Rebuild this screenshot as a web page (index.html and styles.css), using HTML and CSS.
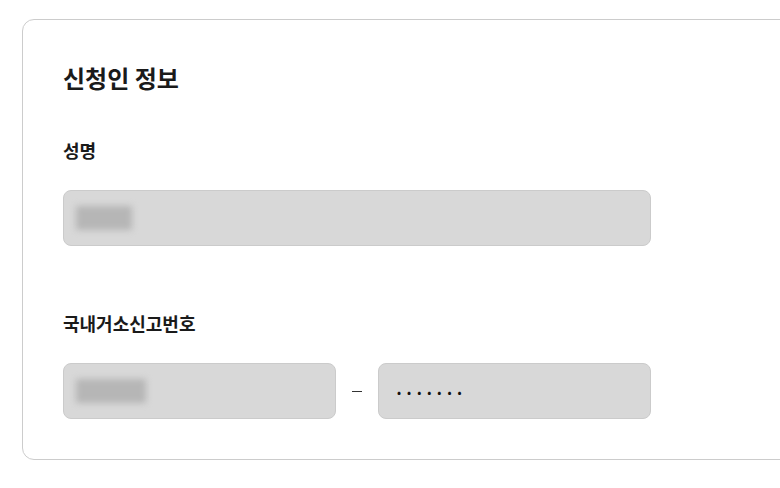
FILE: index.html
```html
<html>
  <head>
    <meta charset="utf-8">
    <link rel="stylesheet" href="styles.css">
  </head>
  <body>
    <div class="card">
      <h2 class="card_title">신청인 정보</h2>

      <div class="field">
        <p class="field_label">성명</p>
        <div class="input_box input_full">
          <span class="blur blur_name"></span>
        </div>
      </div><!-- field -->

      <div class="field field_reg">
        <p class="field_label">국내거소신고번호</p>
        <div class="input_row">
          <div class="input_box input_half">
            <span class="blur blur_num"></span>
          </div>
          <span class="dash"></span>
          <div class="input_box input_half">
            <span class="secret">•••••••</span>
          </div>
        </div>
      </div><!-- field -->
    </div><!-- card -->
  </body>
</html>
```

FILE: styles.css
```css
body { margin: 0; background: #ffffff; font-family: "Noto Sans CJK KR", "Noto Sans", sans-serif; color: #1a1a1a; }

.card { width: 820px; height: 441px; margin: 19px 0 0 22px; padding: 40px 40px; box-sizing: border-box; border: 1px solid #cccccc; border-radius: 12px; }
.card_title { margin: 0; font-size: 24px; line-height: 36px; font-weight: 700; }

.field { margin-top: 41px; }
.field_reg { margin-top: 64px; }
.field_label { margin: 0 0 27px; font-size: 18px; line-height: 26px; font-weight: 700; }

.input_row { display: flex; align-items: center; }
.input_box { display: flex; align-items: center; height: 56px; padding: 0 12px; box-sizing: border-box; background: #d8d8d8; border: 1px solid #cbcbcb; border-radius: 8px; }
.input_full { width: 588px; }
.input_half { width: 273px; }

.dash { width: 10px; height: 1px; margin: 0 16px; background: #333333; }

.blur { display: block; background: #b6b6b6; filter: blur(3px); }
.blur_name { width: 56px; height: 24px; }
.blur_num { width: 70px; height: 24px; }

.secret { margin-left: 6px; font-size: 12px; letter-spacing: 6px; color: #111111; }
```
